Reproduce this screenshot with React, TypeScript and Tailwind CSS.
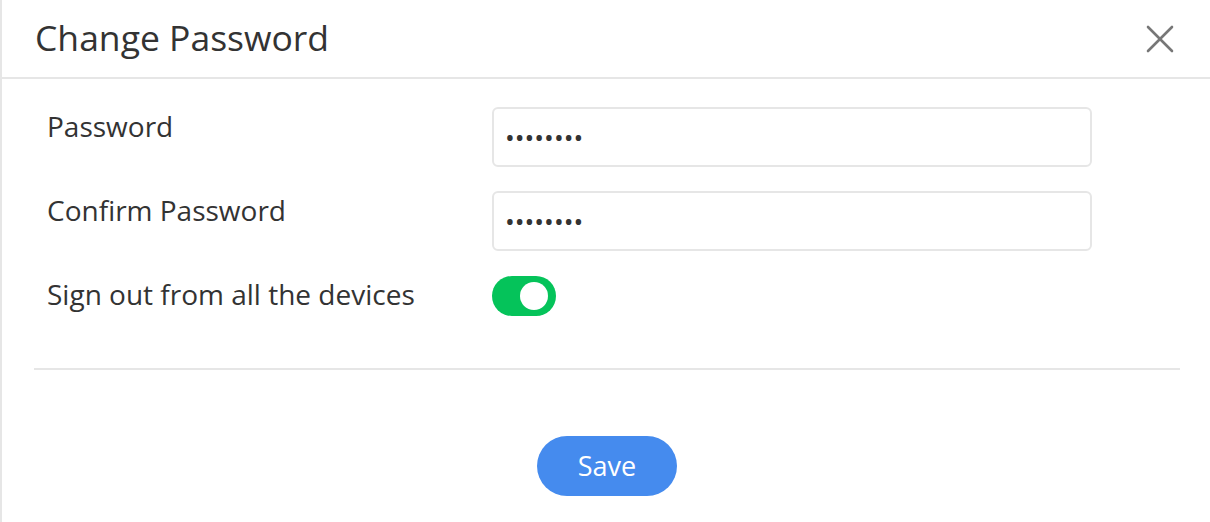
import React, { useState } from 'react';

const App: React.FC = () => {
  const [signOut, setSignOut] = useState(true);

  return (
    <div className="w-[1210px] h-[522px] bg-white border-l-2 border-[#e6e6e6] text-[#333] font-['Open_Sans',sans-serif] overflow-hidden">
      <div className="h-[79px] flex items-center justify-between pl-[33px] pr-[36px] border-b-2 border-[#e6e6e6]">
        <h1 className="text-[35.5px] leading-none pb-[2px]">Change Password</h1>
        <button className="w-[28px] h-[28px] flex items-center justify-center text-[#777]">
          <svg viewBox="0 0 28 28" className="w-[28px] h-[28px]" fill="none" stroke="currentColor" strokeWidth="2.6" strokeLinecap="round">
            <line x1="2" y1="2" x2="26" y2="26" />
            <line x1="26" y1="2" x2="2" y2="26" />
          </svg>
        </button>
      </div>

      <div className="pt-[28px] pl-[45px]">
        <div className="flex items-start">
          <label className="w-[445px] text-[28px] leading-[40px] -mt-[1px]">Password</label>
          <input
            type="password"
            defaultValue="12345678"
            className="w-[600px] h-[60px] border-2 border-[#e6e6e6] rounded-[6px] px-[11px] text-[26px] text-[#333] outline-none"
          />
        </div>
        <div className="flex items-start mt-[24px]">
          <label className="w-[445px] text-[28px] leading-[40px] -mt-[1px]">Confirm Password</label>
          <input
            type="password"
            defaultValue="12345678"
            className="w-[600px] h-[60px] border-2 border-[#e6e6e6] rounded-[6px] px-[11px] text-[26px] text-[#333] outline-none"
          />
        </div>
        <div className="flex items-center mt-[25px]">
          <label className="w-[445px] text-[28px] leading-[40px] -mt-[4px]">Sign out from all the devices</label>
          <button
            onClick={() => setSignOut(!signOut)}
            className={`w-[64px] h-[40px] rounded-full flex items-center px-[8px] ${signOut ? 'bg-[#05c35a] justify-end' : 'bg-[#ccc] justify-start'}`}
          >
            <span className="w-[28px] h-[28px] rounded-full bg-white" />
          </button>
        </div>
      </div>

      <div className="ml-[32px] mr-[30px] mt-[52px] border-t-2 border-[#e6e6e6]" />

      <div className="flex justify-center ml-[32px] mr-[30px] pt-[66px]">
        <button className="w-[140px] h-[60px] rounded-full bg-[#458bee] text-white text-[27px]">Save</button>
      </div>
    </div>
  );
};

export default App;
